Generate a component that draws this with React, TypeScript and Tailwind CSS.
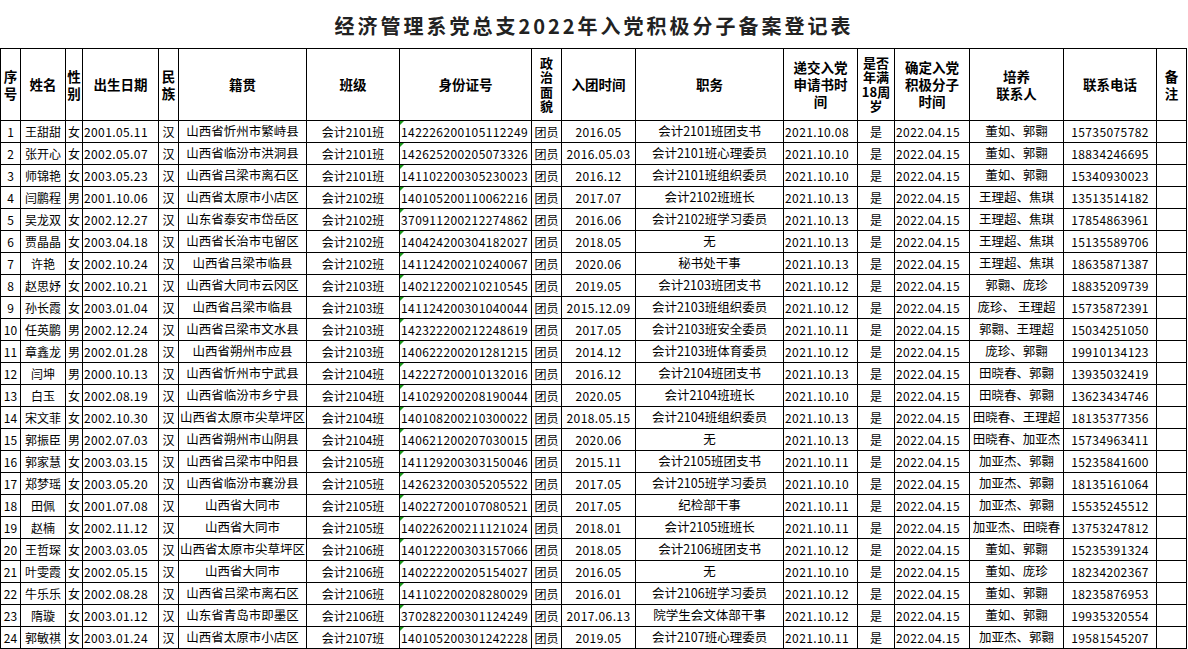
const cols = [20, 45, 17, 76, 20, 127, 93, 132, 30, 74, 148, 74, 37, 75, 94, 93, 30]

const rows: string[][] = [
  ["1", "王甜甜", "女", "2001.05.11", "汉", "山西省忻州市繁峙县", "会计2101班", "142226200105112249", "团员", "2016.05", "会计2101班团支书", "2021.10.08", "是", "2022.04.15", "董如、郭翾", "15735075782"],
  ["2", "张开心", "女", "2002.05.07", "汉", "山西省临汾市洪洞县", "会计2101班", "142625200205073326", "团员", "2016.05.03", "会计2101班心理委员", "2021.10.10", "是", "2022.04.15", "董如、郭翾", "18834246695"],
  ["3", "师锦艳", "女", "2003.05.23", "汉", "山西省吕梁市离石区", "会计2101班", "141102200305230023", "团员", "2016.12", "会计2101班组织委员", "2021.10.10", "是", "2022.04.15", "董如、郭翾", "15340930023"],
  ["4", "闫鹏程", "男", "2001.10.06", "汉", "山西省太原市小店区", "会计2102班", "140105200110062216", "团员", "2017.07", "会计2102班班长", "2021.10.13", "是", "2022.04.15", "王理超、焦琪", "13513514182"],
  ["5", "吴龙双", "女", "2002.12.27", "汉", "山东省泰安市岱岳区", "会计2102班", "370911200212274862", "团员", "2016.06", "会计2102班学习委员", "2021.10.13", "是", "2022.04.15", "王理超、焦琪", "17854863961"],
  ["6", "贾晶晶", "女", "2003.04.18", "汉", "山西省长治市屯留区", "会计2102班", "140424200304182027", "团员", "2018.05", "无", "2021.10.13", "是", "2022.04.15", "王理超、焦琪", "15135589706"],
  ["7", "许艳", "女", "2002.10.24", "汉", "山西省吕梁市临县", "会计2102班", "141124200210240067", "团员", "2020.06", "秘书处干事", "2021.10.13", "是", "2022.04.15", "王理超、焦琪", "18635871387"],
  ["8", "赵思妤", "女", "2002.10.21", "汉", "山西省大同市云冈区", "会计2103班", "140212200210210545", "团员", "2019.05", "会计2103班团支书", "2021.10.12", "是", "2022.04.15", "郭翾、庞珍", "18835209739"],
  ["9", "孙长霞", "女", "2003.01.04", "汉", "山西省吕梁市临县", "会计2103班", "141124200301040044", "团员", "2015.12.09", "会计2103班组织委员", "2021.10.12", "是", "2022.04.15", "庞珍、 王理超", "15735872391"],
  ["10", "任英鹏", "男", "2002.12.24", "汉", "山西省吕梁市文水县", "会计2103班", "142322200212248619", "团员", "2017.05", "会计2103班安全委员", "2021.10.11", "是", "2022.04.15", "郭翾、王理超", "15034251050"],
  ["11", "章鑫龙", "男", "2002.01.28", "汉", "山西省朔州市应县", "会计2103班", "140622200201281215", "团员", "2014.12", "会计2103班体育委员", "2021.10.12", "是", "2022.04.15", "庞珍、郭翾", "19910134123"],
  ["12", "闫坤", "男", "2000.10.13", "汉", "山西省忻州市宁武县", "会计2104班", "142227200010132016", "团员", "2016.12", "会计2104班团支书", "2021.10.13", "是", "2022.04.15", "田晓春、郭翾", "13935032419"],
  ["13", "白玉", "女", "2002.08.19", "汉", "山西省临汾市乡宁县", "会计2104班", "141029200208190044", "团员", "2020.05", "会计2104班班长", "2021.10.10", "是", "2022.04.15", "田晓春、郭翾", "13623434746"],
  ["14", "宋文菲", "女", "2002.10.30", "汉", "山西省太原市尖草坪区", "会计2104班", "140108200210300022", "团员", "2018.05.15", "会计2104班组织委员", "2021.10.13", "是", "2022.04.15", "田晓春、王理超", "18135377356"],
  ["15", "郭振臣", "男", "2002.07.03", "汉", "山西省朔州市山阴县", "会计2104班", "140621200207030015", "团员", "2020.06", "无", "2021.10.13", "是", "2022.04.15", "田晓春、加亚杰", "15734963411"],
  ["16", "郭家慧", "女", "2003.03.15", "汉", "山西省吕梁市中阳县", "会计2105班", "141129200303150046", "团员", "2015.11", "会计2105班团支书", "2021.10.11", "是", "2022.04.15", "加亚杰、郭翾", "15235841600"],
  ["17", "郑梦瑶", "女", "2003.05.20", "汉", "山西省临汾市襄汾县", "会计2105班", "142623200305205522", "团员", "2017.05", "会计2105班学习委员", "2021.10.10", "是", "2022.04.15", "加亚杰、郭翾", "18135161064"],
  ["18", "田佩", "女", "2001.07.08", "汉", "山西省大同市", "会计2105班", "140227200107080521", "团员", "2017.05", "纪检部干事", "2021.10.11", "是", "2022.04.15", "加亚杰、郭翾", "15535245512"],
  ["19", "赵楠", "女", "2002.11.12", "汉", "山西省大同市", "会计2105班", "140226200211121024", "团员", "2018.01", "会计2105班班长", "2021.10.11", "是", "2022.04.15", "加亚杰、田晓春", "13753247812"],
  ["20", "王哲琛", "女", "2003.03.05", "汉", "山西省太原市尖草坪区", "会计2106班", "140122200303157066", "团员", "2018.05", "会计2106班团支书", "2021.10.12", "是", "2022.04.15", "董如、郭翾", "15235391324"],
  ["21", "叶雯霞", "女", "2002.05.15", "汉", "山西省大同市", "会计2106班", "140222200205154027", "团员", "2016.05", "无", "2021.10.10", "是", "2022.04.15", "董如、庞珍", "18234202367"],
  ["22", "牛乐乐", "女", "2002.08.28", "汉", "山西省吕梁市离石区", "会计2106班", "141102200208280029", "团员", "2016.01", "会计2106班学习委员", "2021.10.12", "是", "2022.04.15", "董如、郭翾", "18235876953"],
  ["23", "隋璇", "女", "2003.01.12", "汉", "山东省青岛市即墨区", "会计2106班", "370282200301124249", "团员", "2017.06.13", "院学生会文体部干事", "2021.10.12", "是", "2022.04.15", "董如、郭翾", "19935320554"],
  ["24", "郭敏祺", "女", "2003.01.24", "汉", "山西省太原市小店区", "会计2107班", "140105200301242228", "团员", "2019.05", "会计2107班心理委员", "2021.10.11", "是", "2022.04.15", "加亚杰、郭翾", "19581545207"],
]

// header labels with the sheet's own line breaks
const headers = [
  "序\n号",
  "姓名",
  "性\n别",
  "出生日期",
  "民\n族",
  "籍贯",
  "班级",
  "身份证号",
  "政\n治\n面\n貌",
  "入团时间",
  "职务",
  "递交入党\n申请书时\n间",
  "是否\n年满\n18周\n岁",
  "确定入党\n积极分子\n时间",
  "培养\n联系人",
  "联系电话",
  "备\n注",
]

// columns that are left-aligned in the sheet
const leftCols = new Set([3, 7, 11, 13])
// numeric columns get slightly wider spacing, like the sheet's half-width digits
const numCols = new Set([3, 7, 9, 11, 13, 15])

export default function App() {
  return (
    <div
      className="h-[649px] w-[1188px] overflow-hidden bg-white text-black"
      style={{ fontFamily: '"Noto Sans CJK SC", "DejaVu Sans", sans-serif' }}
    >
      {/* Title */}
      <div className="flex h-[48px] items-center justify-center pt-1">
        <h1 className="text-[20px] font-bold tracking-[3px] text-[#222]">经济管理系党总支2022年入党积极分子备案登记表</h1>
      </div>

      <table className="table-fixed border-collapse border-l border-black text-[12px] leading-none">
        <colgroup>
          {cols.map((w, i) => (
            <col key={i} style={{ width: w }} />
          ))}
        </colgroup>
        <thead>
          <tr className="h-[72px]">
            {headers.map((h, i) => (
              <th
                key={i}
                className={`overflow-hidden whitespace-pre border border-black px-0 text-center align-middle font-bold ${
                  i === 8 || i === 12 ? "text-[13px] leading-[14.5px]" : "text-[13.5px] leading-[17px]"
                }`}
              >
                {h}
              </th>
            ))}
          </tr>
        </thead>
        <tbody>
          {rows.map((r, ri) => (
            <tr key={ri} className="h-[22px]">
              {r.map((c, ci) => (
                <td
                  key={ci}
                  className={`relative overflow-hidden whitespace-nowrap border border-black px-[1px] align-middle ${
                    leftCols.has(ci) ? "text-left" : "text-center"
                  } ${numCols.has(ci) ? "tracking-[0.4px]" : ""} ${
                    ci === 5 || ci === 10 || ci === 14 ? "text-[12.5px]" : ""
                  }`}
                >
                  {ci === 7 && (
                    <span className="absolute left-0 top-0 h-0 w-0 border-r-[4px] border-t-[4px] border-r-transparent border-t-[#1a9a1a]" />
                  )}
                  {c}
                </td>
              ))}
              <td className="border border-black" />
            </tr>
          ))}
        </tbody>
      </table>
    </div>
  )
}
